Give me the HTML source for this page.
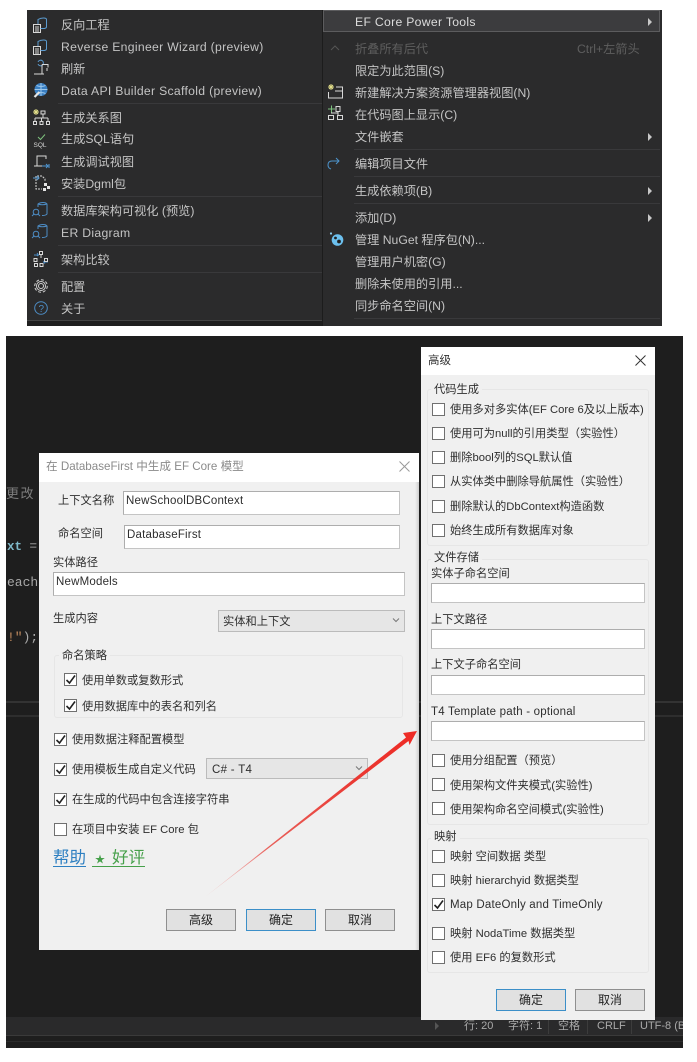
<!DOCTYPE html>
<html lang="zh"><head><meta charset="utf-8"><title>EF Core Power Tools</title>
<style>
html,body{margin:0;padding:0;background:#fff}
body{width:697px;height:1062px;position:relative;overflow:hidden;font-family:"Liberation Sans","Noto Sans CJK SC",sans-serif;font-size:12px}
.a{position:absolute}
.t{position:absolute;white-space:nowrap;line-height:16px;height:16px;filter:blur(.3px)}
.m{color:#c4c4c4;font-size:12.2px;margin-top:1px}
.l{letter-spacing:.31px}
.d{color:#2e2e2e;font-size:11.25px;margin-top:1px}
.s{position:absolute;height:1px;background:#39393b}
.i{position:absolute;background:#fff;border:1px solid #adadad;box-sizing:border-box;border-bottom-color:#c4c4c4;border-right-color:#c4c4c4}
.c{position:absolute;width:13px;height:13px;box-sizing:border-box;background:#fff;border:1px solid #707070}
.b{position:absolute;height:22px;box-sizing:border-box;background:#e1e1e1;border:1px solid #8f8f8f;color:#222;font-size:12px;text-align:center;line-height:20px;width:70px}
.p{border-color:#3c8fc8}
.g{position:absolute;border:1px solid #e6e6e6;border-radius:3px;box-sizing:border-box}
.ar{position:absolute;width:0;height:0;border-left:4px solid #c8c8c8;border-top:4px solid transparent;border-bottom:4px solid transparent;left:648px}
svg{position:absolute;overflow:visible}
</style></head><body>

<!-- top screenshot -->
<div class="a" style="left:27px;top:10px;width:635px;height:316px;background:#2b2b2c"></div>
<div class="a" style="left:322px;top:10px;width:1px;height:316px;background:#1c1c1c"></div>
<div class="a" style="left:323px;top:10px;width:337px;height:22px;background:#3c3c3e;border:1px solid #5c5c5e;box-sizing:border-box"></div>
<div class="s" style="left:27px;top:320px;width:295px;background:#444"></div>
<div class="a" style="left:27px;top:321px;width:295px;height:5px;background:#1f1f1f"></div>

<div class="s" style="left:58px;top:103px;width:264px"></div>
<div class="s" style="left:58px;top:196px;width:264px"></div>
<div class="s" style="left:58px;top:245px;width:264px"></div>
<div class="s" style="left:58px;top:272px;width:264px"></div>
<div class="s" style="left:354px;top:149px;width:306px"></div>
<div class="s" style="left:354px;top:176px;width:306px"></div>
<div class="s" style="left:354px;top:203px;width:306px"></div>
<div class="s" style="left:354px;top:318px;width:306px"></div>

<span class="t m" style="left:61px;top:16px">反向工程</span>
<span class="t m l" style="left:61px;top:38px">Reverse Engineer Wizard (preview)</span>
<span class="t m" style="left:61px;top:60px">刷新</span>
<span class="t m l" style="left:61px;top:82px">Data API Builder Scaffold (preview)</span>
<span class="t m" style="left:61px;top:109px">生成关系图</span>
<span class="t m" style="left:61px;top:130px">生成SQL语句</span>
<span class="t m" style="left:61px;top:153px">生成调试视图</span>
<span class="t m" style="left:61px;top:175px">安装Dgml包</span>
<span class="t m" style="left:61px;top:202px">数据库架构可视化 (预览)</span>
<span class="t m l" style="left:61px;top:224px">ER Diagram</span>
<span class="t m" style="left:61px;top:251px">架构比较</span>
<span class="t m" style="left:61px;top:278px">配置</span>
<span class="t m" style="left:61px;top:300px">关于</span>

<span class="t m l" style="left:355px;top:13px;color:#dcdcdc">EF Core Power Tools</span>
<span class="t m" style="left:355px;top:40px;color:#5e5e5e">折叠所有后代</span>
<span class="t m" style="left:577px;top:40px;color:#5e5e5e">Ctrl+左箭头</span>
<span class="t m" style="left:355px;top:62px">限定为此范围(S)</span>
<span class="t m" style="left:355px;top:84px">新建解决方案资源管理器视图(N)</span>
<span class="t m" style="left:355px;top:106px">在代码图上显示(C)</span>
<span class="t m" style="left:355px;top:128px">文件嵌套</span>
<span class="t m" style="left:355px;top:155px">编辑项目文件</span>
<span class="t m" style="left:355px;top:182px">生成依赖项(B)</span>
<span class="t m" style="left:355px;top:209px">添加(D)</span>
<span class="t m" style="left:355px;top:231px">管理 NuGet 程序包(N)...</span>
<span class="t m" style="left:355px;top:253px">管理用户机密(G)</span>
<span class="t m" style="left:355px;top:275px">删除未使用的引用...</span>
<span class="t m" style="left:355px;top:297px">同步命名空间(N)</span>

<div class="ar" style="top:18px"></div>
<div class="ar" style="top:133px"></div>
<div class="ar" style="top:187px"></div>
<div class="ar" style="top:214px"></div>

<!-- menu icons -->
<svg width="697" height="330" style="left:0;top:0" fill="none" stroke-width="1">
<g stroke="#d8d8d8">
<path d="M33.500 24.500h7v8h-7zM35 27h4M35 29h4M35 31h4"/>
<path d="M33.500 46.500h7v8h-7zM35 49h4M35 51h4M35 53h4"/>
</g>
<g stroke="#5b9bd0">
<path d="M38 24v-4.500q2.500-1.500 5.500-1.500t3 1.500v7.500q0 1-2 1.500h-4"/>
<path d="M38 46v-4.500q2.500-1.500 5.500-1.500t3 1.500v7.500q0 1-2 1.500h-4"/>
<path d="M38 64a2.800 2.800 0 1 0 0-2"/>
</g>
<path stroke="#d8d8d8" d="M42 64.500h6v3M42 64.500v9.500M34 74h10M47 68v3"/>
<circle cx="41" cy="89.500" r="6.500" fill="#3a7fc2"/>
<path stroke="#9cc7ea" d="M34.500 89.500h13M41 83v13M36.500 85.500q4.500 2 9 0M36.500 93.500q4.500-2 9 0"/>
<path stroke="#e6e6e6" stroke-width="2.200" d="M34.500 97l5-5"/>
<path stroke="#e3e08a" d="M33 112h6M36 109v6M34 110l4 4M38 110l-4 4"/>
<path stroke="#d8d8d8" d="M41 111h4v3h-4zM43 114v4M35 118h13M35 118v3M41.500 118v3M48 118v3M33.500 121.500h3v3h-3zM40 121.500h3v3h-3zM46.500 121.500h3v3h-3z"/>
<path stroke="#7ec27e" d="M38 137l2.500 2.500 4.500-5"/>
<text x="33.500" y="147" font-size="6.500" font-family="Liberation Sans,sans-serif" fill="#d8d8d8">SQL</text>
<path stroke="#d8d8d8" d="M37 166v-10h9v3M34 166h11"/>
<path stroke="#4f97d3" d="M42 166h6M46 164l2 2-2 2M49 164v4"/>
<path stroke="#d8d8d8" stroke-dasharray="2 1" d="M36 181v-5h6l3 3v2M36 182v7h6"/>
<path stroke="#5b9bd0" d="M33 178h6M37 176l2 2-2 2"/>
<path fill="#e6e6e6" stroke="none" d="M44 183h3v3h-3zM47 186h3v3h-3zM43 188h3v3h-3z"/>
<g stroke="#4d8cc4">
<path d="M38 207v-3q2-1.500 5-1.500t4 1.500v10q-1 1.500-5 1.500M38 204q4 1.500 9 0"/>
<circle cx="36" cy="212" r="2.800"/><path d="M34 214l-2 2M38 214l2 2"/>
<path d="M38 229v-3q2-1.500 5-1.500t4 1.500v10q-1 1.500-5 1.500M38 226q4 1.500 9 0"/>
<circle cx="36" cy="234" r="2.800"/><path d="M34 236l-2 2M38 236l2 2"/>
<path d="M34 255h4M37 253l1.500 2-1.500 1M48 262h-4M45 260l-1.500 2 1.500 1.500"/>
<circle cx="41" cy="308" r="6.300"/>
</g>
<path stroke="#d8d8d8" d="M39.500 251.500h3v3h-3zM34 258.500h3v3h-3zM44.500 258.500h3v3h-3zM41 255v3M34.500 263.500h3v3h-3zM40 263.500h3v3h-3z"/>
<text x="38.500" y="312" font-size="10" font-family="Liberation Sans,sans-serif" fill="#4d8cc4">?</text>
<g stroke="#d0d0d0" transform="translate(41 286)">
<circle r="2.500"/><circle r="6.300" stroke-dasharray="3 1.900"/><circle r="4.500"/>
</g>
<path stroke="#555" d="M331 50l4-4 4 4"/>
<path stroke="#e3e08a" d="M328 87h6M331 84v6M329 85l4 4M333 85l-4 4"/>
<path stroke="#d8d8d8" d="M336 87h6.500v11h-14v-6M335 91h8"/>
<path stroke="#7ec27e" d="M328 109h7M331.500 105.500v7"/>
<path stroke="#d8d8d8" d="M336 106.500h4v5h-4zM328.500 115.500h5v4h-5zM337.500 115.500h5v4h-5zM338 112v3M331 113h7"/>
<path stroke="#4d94cc" d="M339 161h-7q-4 0-4 4 0 3 3 4M336 158l3 3-3 3"/>
<circle cx="337.500" cy="240" r="5.800" fill="#6cc0ef"/>
<circle cx="335.500" cy="238" r="1.400" fill="#1f1f1f"/><circle cx="339" cy="241.500" r="1.900" fill="#1f1f1f"/>
<circle cx="331" cy="233.500" r="1.100" fill="#8ccdf0"/>
</svg>

<!-- bottom screenshot -->
<div class="a" style="left:6px;top:336px;width:677px;height:712px;background:#1e1e1e"></div>
<div class="a" style="left:6px;top:701px;width:677px;height:2px;background:#333"></div>
<div class="a" style="left:6px;top:715px;width:677px;height:2px;background:#2e2e2e"></div>
<div class="a" style="left:6px;top:1017px;width:677px;height:18px;background:#2a2a2b"></div>
<div class="a" style="left:6px;top:1035px;width:677px;height:1px;background:#3a3a3a"></div>
<div class="a" style="left:6px;top:1041px;width:677px;height:1px;background:#2c2c2c"></div>
<span class="t" style="left:6px;top:486px;color:#7e7e7e;font-size:13px;letter-spacing:1.500px">更改</span>
<span class="t" style="left:7px;top:539px;color:#7fb8c8;font-family:'Liberation Mono',monospace;font-size:12.500px;font-weight:bold">xt <span style="color:#777">=</span></span>
<span class="t" style="left:7px;top:575px;color:#a8a8a8;font-family:'Liberation Mono',monospace;font-size:13px">eacher</span>
<span class="t" style="left:7px;top:630px;color:#c08a5e;font-family:'Liberation Mono',monospace;font-size:13px">!"<span style="color:#aaa">);</span></span>

<svg width="697" height="1062" style="left:0;top:0"><path d="M435 1022l4 4-4 4z" fill="#555"/></svg>
<span class="t" style="left:464px;top:1018px;color:#aaa;font-size:11px">行: 20</span>
<span class="t" style="left:508px;top:1018px;color:#aaa;font-size:11px">字符: 1</span>
<span class="t" style="left:558px;top:1018px;color:#aaa;font-size:11px">空格</span>
<span class="t" style="left:597px;top:1018px;color:#aaa;font-size:11px">CRLF</span>
<span class="t" style="left:640px;top:1018px;width:43px;overflow:hidden;color:#aaa;font-size:11px">UTF-8 (BOM)</span>
<div class="a" style="left:548px;top:1020px;width:1px;height:14px;background:#3c3c3c"></div>
<div class="a" style="left:587px;top:1020px;width:1px;height:14px;background:#3c3c3c"></div>
<div class="a" style="left:631px;top:1020px;width:1px;height:14px;background:#3c3c3c"></div>

<!-- dialog 1 -->
<div class="a" style="left:39px;top:453px;width:380px;height:497px;background:#f0f0f0"></div>
<div class="a" style="left:39px;top:453px;width:380px;height:29px;background:#fff"></div>
<div class="a" style="left:415px;top:482px;width:4px;height:468px;background:linear-gradient(90deg,#f0f0f0,#cfcfcf)"></div>
<span class="t" style="left:46px;top:459px;color:#8a8a8a;font-size:11.600px">在 DatabaseFirst 中生成 EF Core 模型</span>
<svg width="12" height="12" style="left:399px;top:461px"><path d="M.5.500l10 10M10.500.500l-10 10" stroke="#999" fill="none"/></svg>

<span class="t d" style="left:58px;top:492px">上下文名称</span>
<div class="i" style="left:123px;top:491px;width:277px;height:24px"></div>
<span class="t d" style="left:126px;top:492px;font-size:11.500px;letter-spacing:.2px">NewSchoolDBContext</span>
<span class="t d" style="left:58px;top:525px">命名空间</span>
<div class="i" style="left:124px;top:525px;width:276px;height:24px"></div>
<span class="t d" style="left:127px;top:526px;font-size:11.500px;letter-spacing:.2px">DatabaseFirst</span>
<span class="t d" style="left:53px;top:554px">实体路径</span>
<div class="i" style="left:53px;top:572px;width:352px;height:24px"></div>
<span class="t d" style="left:56px;top:573px;font-size:11.500px;letter-spacing:.2px">NewModels</span>
<span class="t d" style="left:53px;top:610px">生成内容</span>
<div class="a" style="left:218px;top:610px;width:187px;height:22px;background:#e6e6e6;border:1px solid #bbb;box-sizing:border-box"></div>
<span class="t d" style="left:223px;top:613px">实体和上下文</span>
<svg width="8" height="5" style="left:392px;top:618px"><path d="M1 .500l3 3 3-3" stroke="#777" fill="none"/></svg>

<div class="g" style="left:54px;top:655px;width:349px;height:63px"></div>
<span class="t d" style="left:59px;top:647px;background:#f0f0f0;padding:0 3px">命名策略</span>
<div class="c" style="left:64px;top:673px"></div>
<span class="t d" style="left:82px;top:672px">使用单数或复数形式</span>
<div class="c" style="left:64px;top:699px"></div>
<span class="t d" style="left:82px;top:698px">使用数据库中的表名和列名</span>
<div class="c" style="left:54px;top:733px"></div>
<span class="t d" style="left:72px;top:731px">使用数据注释配置模型</span>
<div class="c" style="left:54px;top:763px"></div>
<span class="t d" style="left:72px;top:761px">使用模板生成自定义代码</span>
<div class="a" style="left:206px;top:758px;width:162px;height:21px;background:#e6e6e6;border:1px solid #bbb;box-sizing:border-box"></div>
<span class="t d" style="left:212px;top:761px;font-size:11.500px;letter-spacing:.3px">C# - T4</span>
<svg width="8" height="5" style="left:355px;top:766px"><path d="M1 .500l3 3 3-3" stroke="#777" fill="none"/></svg>
<div class="c" style="left:54px;top:793px"></div>
<span class="t d" style="left:72px;top:791px">在生成的代码中包含连接字符串</span>
<div class="c" style="left:54px;top:823px"></div>
<span class="t d" style="left:72px;top:821px">在项目中安装 EF Core 包</span>
<span class="t" style="left:53px;top:850px;color:#2d7fc1;font-size:16.500px;line-height:17px;height:16px;border-bottom:1px solid #2d7fc1">帮助</span>
<span class="t" style="left:92px;top:850px;color:#46a04a;font-size:16.500px;line-height:17px;height:16px;border-bottom:1px solid #46a04a"><span style="font-size:10px;margin:0 7px 0 3px">★</span>好评</span>
<div class="b" style="left:166px;top:909px">高级</div>
<div class="b p" style="left:246px;top:909px">确定</div>
<div class="b" style="left:325px;top:909px">取消</div>

<svg width="697" height="1062" style="left:0;top:0" fill="none" stroke="#222" stroke-width="1.600">
<path d="M66.500 680l3 3 5.500-7.500"/>
<path d="M66.500 706l3 3 5.500-7.500"/>
<path d="M56.500 740l3 3 5.500-7.500"/>
<path d="M56.500 770l3 3 5.500-7.500"/>
<path d="M56.500 800l3 3 5.500-7.500"/>
</svg>

<!-- dialog 2 -->
<div class="a" style="left:421px;top:347px;width:234px;height:673px;background:#f0f0f0"></div>
<div class="a" style="left:421px;top:347px;width:234px;height:28px;background:#fff"></div>
<span class="t" style="left:428px;top:353px;color:#333;font-size:11.500px">高级</span>
<svg width="12" height="12" style="left:635px;top:355px"><path d="M.5.500l10 10M10.500.500l-10 10" stroke="#333" fill="none"/></svg>

<div class="g" style="left:427px;top:389px;width:222px;height:157px"></div>
<span class="t d" style="left:431px;top:381px;background:#f0f0f0;padding:0 3px">代码生成</span>
<div class="c" style="left:432px;top:403px"></div><span class="t d" style="left:450px;top:401px">使用多对多实体(EF Core 6及以上版本)</span>
<div class="c" style="left:432px;top:427px"></div><span class="t d" style="left:450px;top:425px">使用可为null的引用类型（实验性）</span>
<div class="c" style="left:432px;top:451px"></div><span class="t d" style="left:450px;top:449px">删除bool列的SQL默认值</span>
<div class="c" style="left:432px;top:475px"></div><span class="t d" style="left:450px;top:473px">从实体类中删除导航属性（实验性）</span>
<div class="c" style="left:432px;top:500px"></div><span class="t d" style="left:450px;top:498px">删除默认的DbContext构造函数</span>
<div class="c" style="left:432px;top:524px"></div><span class="t d" style="left:450px;top:522px">始终生成所有数据库对象</span>

<div class="g" style="left:427px;top:559px;width:222px;height:266px"></div>
<span class="t d" style="left:431px;top:549px;background:#f0f0f0;padding:0 3px">文件存储</span>
<span class="t d" style="left:431px;top:565px">实体子命名空间</span>
<div class="i" style="left:431px;top:583px;width:214px;height:20px"></div>
<span class="t d" style="left:431px;top:611px">上下文路径</span>
<div class="i" style="left:431px;top:629px;width:214px;height:20px"></div>
<span class="t d" style="left:431px;top:656px">上下文子命名空间</span>
<div class="i" style="left:431px;top:675px;width:214px;height:20px"></div>
<span class="t d" style="left:431px;top:703px;font-size:11.500px;letter-spacing:.2px">T4 Template path - optional</span>
<div class="i" style="left:431px;top:721px;width:214px;height:20px"></div>
<div class="c" style="left:432px;top:754px"></div><span class="t d" style="left:450px;top:752px">使用分组配置（预览）</span>
<div class="c" style="left:432px;top:778px"></div><span class="t d" style="left:450px;top:777px">使用架构文件夹模式(实验性)</span>
<div class="c" style="left:432px;top:802px"></div><span class="t d" style="left:450px;top:801px">使用架构命名空间模式(实验性)</span>

<div class="g" style="left:427px;top:838px;width:222px;height:135px"></div>
<span class="t d" style="left:431px;top:828px;background:#f0f0f0;padding:0 3px">映射</span>
<div class="c" style="left:432px;top:850px"></div><span class="t d" style="left:450px;top:848px">映射 空间数据 类型</span>
<div class="c" style="left:432px;top:874px"></div><span class="t d" style="left:450px;top:872px">映射 hierarchyid 数据类型</span>
<div class="c" style="left:432px;top:898px"></div><span class="t d" style="left:450px;top:896px;font-size:11.500px;letter-spacing:.2px">Map DateOnly and TimeOnly</span>
<div class="c" style="left:432px;top:927px"></div><span class="t d" style="left:450px;top:925px">映射 NodaTime 数据类型</span>
<div class="c" style="left:432px;top:951px"></div><span class="t d" style="left:450px;top:949px">使用 EF6 的复数形式</span>
<div class="b p" style="left:496px;top:989px">确定</div>
<div class="b" style="left:575px;top:989px">取消</div>
<svg width="697" height="1062" style="left:0;top:0" fill="none" stroke="#222" stroke-width="1.600">
<path d="M434.500 905l3 3 5.500-7.500"/>
</svg>

<!-- red arrow -->
<svg width="697" height="1062" style="left:0;top:0">
<defs><linearGradient id="r" gradientUnits="userSpaceOnUse" x1="205" y1="897" x2="416" y2="732"><stop offset="0" stop-color="#f39a9a" stop-opacity=".3"/><stop offset=".3" stop-color="#e8605a"/><stop offset=".7" stop-color="#ea3a34"/><stop offset="1" stop-color="#ee2a24"/></linearGradient></defs>
<path d="M205 897L406 737.500 403 733 417 731 409.500 745 408.500 741Z" fill="url(#r)"/>
</svg>
</body></html>
